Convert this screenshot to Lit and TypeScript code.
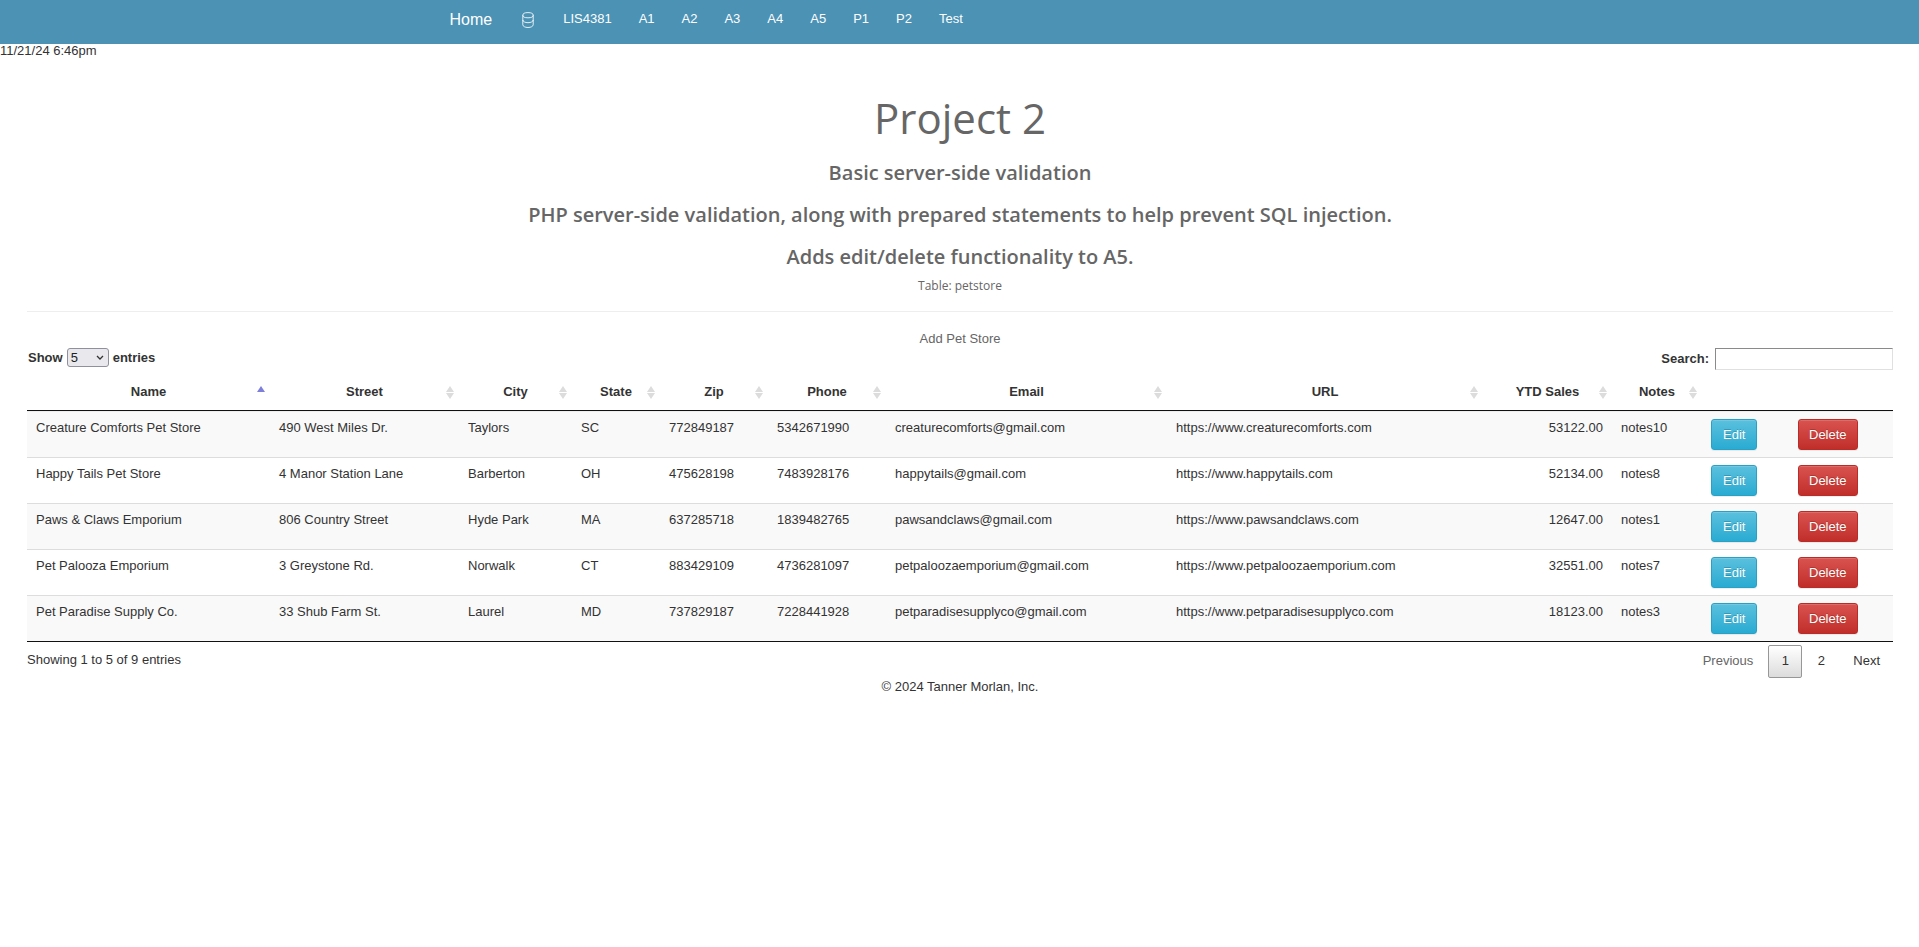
import { LitElement, html, css } from "lit";
import { customElement } from "lit/decorators.js";

interface Column {
  label: string;
  width: number;
}

interface Store {
  name: string;
  street: string;
  city: string;
  state: string;
  zip: string;
  phone: string;
  email: string;
  url: string;
  sales: string;
  notes: string;
}

const COLUMNS: Column[] = [
  { label: "Name", width: 243 },
  { label: "Street", width: 189 },
  { label: "City", width: 113 },
  { label: "State", width: 88 },
  { label: "Zip", width: 108 },
  { label: "Phone", width: 118 },
  { label: "Email", width: 281 },
  { label: "URL", width: 316 },
  { label: "YTD Sales", width: 129 },
  { label: "Notes", width: 90 },
  { label: "", width: 87 },
  { label: "", width: 104 },
];
const TOTAL = COLUMNS.reduce((sum, c) => sum + c.width, 0);

const STORES: Store[] = [
  { name: "Creature Comforts Pet Store", street: "490 West Miles Dr.", city: "Taylors", state: "SC", zip: "772849187", phone: "5342671990", email: "creaturecomforts@gmail.com", url: "https://www.creaturecomforts.com", sales: "53122.00", notes: "notes10" },
  { name: "Happy Tails Pet Store", street: "4 Manor Station Lane", city: "Barberton", state: "OH", zip: "475628198", phone: "7483928176", email: "happytails@gmail.com", url: "https://www.happytails.com", sales: "52134.00", notes: "notes8" },
  { name: "Paws & Claws Emporium", street: "806 Country Street", city: "Hyde Park", state: "MA", zip: "637285718", phone: "1839482765", email: "pawsandclaws@gmail.com", url: "https://www.pawsandclaws.com", sales: "12647.00", notes: "notes1" },
  { name: "Pet Palooza Emporium", street: "3 Greystone Rd.", city: "Norwalk", state: "CT", zip: "883429109", phone: "4736281097", email: "petpaloozaemporium@gmail.com", url: "https://www.petpaloozaemporium.com", sales: "32551.00", notes: "notes7" },
  { name: "Pet Paradise Supply Co.", street: "33 Shub Farm St.", city: "Laurel", state: "MD", zip: "737829187", phone: "7228441928", email: "petparadisesupplyco@gmail.com", url: "https://www.petparadisesupplyco.com", sales: "18123.00", notes: "notes3" },
];

const LINKS = ["LIS4381", "A1", "A2", "A3", "A4", "A5", "P1", "P2", "Test"];

@customElement("site-nav")
class SiteNav extends LitElement {
  static styles = css`
    :host {
      display: block;
      background: #4b92b5;
    }
    .bar {
      box-sizing: border-box;
      max-width: 1052px;
      min-height: 44px;
      margin: 0 auto;
      padding: 10px 16px 6px;
      display: flex;
      align-items: flex-start;
    }
    a {
      color: #fff;
      text-decoration: none;
      font-size: 13px;
      line-height: 18px;
      padding: 0 14px 0 13px;
    }
    .brand {
      font-size: 16px;
      line-height: 20px;
      padding: 0 10px 0 0;
    }
    .data {
      padding: 2px 16px 0 20px;
      line-height: 0;
    }
  `;

  render() {
    return html`
      <nav class="bar">
        <a class="brand" href="#">Home</a>
        <a class="data" href="#" aria-label="Database">
          <svg width="12" height="16" viewBox="0 0 12 16" fill="none" stroke="#fff" stroke-opacity="0.85">
            <ellipse cx="6" cy="3.2" rx="5.2" ry="2.6" />
            <path d="M.8 3.200v9.600c0 1.500 2.300 2.700 5.200 2.700s5.200-1.200 5.200-2.700V3.200M.8 8c0 1.500 2.300 2.700 5.200 2.700s5.200-1.200 5.200-2.700" />
          </svg>
        </a>
        ${LINKS.map((l) => html`<a href="#">${l}</a>`)}
      </nav>
    `;
  }
}

@customElement("store-table")
class StoreTable extends LitElement {
  static styles = css`
    :host {
      display: block;
    }
    .controls {
      display: flex;
      justify-content: space-between;
      align-items: flex-start;
      min-height: 26px;
    }
    label {
      display: flex;
      align-items: center;
      font-weight: bold;
      line-height: 18px;
    }
    .length {
      gap: 4px;
      padding-left: 1px;
    }
    select {
      box-sizing: border-box;
      width: 42px;
      height: 19px;
      margin: 0;
      padding: 0 16px 0 3px;
      border: 1px solid #8f8f9d;
      border-radius: 3px;
      appearance: none;
      background: #e9e9ed url("data:image/svg+xml,%3Csvg xmlns='http://www.w3.org/2000/svg' width='8' height='5'%3E%3Cpath d='M1 1l3 3 3-3' fill='none' stroke='%23333' stroke-width='1.300'/%3E%3C/svg%3E") no-repeat right 4px center;
      font: inherit;
      font-weight: normal;
      line-height: 17px;
      color: #222;
    }
    .search {
      gap: 6px;
    }
    input {
      box-sizing: border-box;
      width: 178px;
      height: 22px;
      margin: 0;
      padding: 0 2px;
      border: 1px solid;
      border-color: #8a8a8a #e0e0e0 #e0e0e0 #8a8a8a;
      background: #fff;
      font: inherit;
    }
    table {
      width: 100%;
      table-layout: fixed;
      border-collapse: separate;
      border-spacing: 0;
      border-bottom: 1px solid #111;
    }
    th {
      height: 18px;
      padding: 9px 16px;
      border-bottom: 1px solid #111;
      font-weight: bold;
      line-height: 18px;
      text-align: center;
      white-space: nowrap;
      background: no-repeat right 5px top 12px;
    }
    .sortable {
      background-image: url("data:image/svg+xml,%3Csvg xmlns='http://www.w3.org/2000/svg' width='8' height='13'%3E%3Cpath d='M4 0l4 6H0zM4 13l4-6H0z' fill='%23dcdcdc'/%3E%3C/svg%3E");
    }
    .sorted {
      background-image: url("data:image/svg+xml,%3Csvg xmlns='http://www.w3.org/2000/svg' width='8' height='13'%3E%3Cpath d='M4 0l4 6H0z' fill='%237e7edb'/%3E%3C/svg%3E");
    }
    td {
      padding: 7px 9px;
      border-top: 1px solid #ddd;
      line-height: 18px;
      vertical-align: top;
      white-space: nowrap;
    }
    tbody tr:first-child td {
      border-top-color: #eee;
    }
    tbody tr:nth-child(odd) {
      background: #f9f9f9;
    }
    .amount {
      text-align: right;
    }
    .btn {
      display: block;
      box-sizing: border-box;
      height: 31px;
      margin: 0;
      padding: 0 11px;
      border: 1px solid #28a1c5;
      border-radius: 3px;
      background: linear-gradient(#5bc0de, #2aabd2);
      box-shadow: inset 0 1px 0 rgba(255, 255, 255, 0.15), 0 1px 1px rgba(0, 0, 0, 0.075);
      font: inherit;
      color: #fff;
      text-shadow: 0 -1px 0 rgba(0, 0, 0, 0.2);
    }
    .danger {
      padding: 0 10px;
      border-color: #b92c28;
      background: linear-gradient(#d9534f, #c12e2a);
    }
    .foot {
      display: flex;
      justify-content: space-between;
      align-items: flex-start;
      padding-top: 3px;
    }
    .info {
      padding-top: 6px;
      line-height: 18px;
    }
    .pages {
      display: flex;
      gap: 2px;
    }
    .page {
      box-sizing: border-box;
      height: 33px;
      min-width: 34px;
      padding: 0 12px 2px;
      border: 1px solid transparent;
      border-radius: 2px;
      background: none;
      font: inherit;
      color: #333;
    }
    .page:disabled {
      color: #666;
    }
    .current {
      border-color: #979797;
      background: linear-gradient(#fff, #dcdcdc);
    }
  `;

  render() {
    return html`
      <div class="controls">
        <label class="length">
          Show
          <select>
            <option selected>5</option>
            <option>10</option>
            <option>25</option>
          </select>
          entries
        </label>
        <label class="search">Search: <input type="search" /></label>
      </div>
      <table>
        <colgroup>
          ${COLUMNS.map((c) => html`<col style="width:${(c.width / TOTAL) * 100}%" />`)}
        </colgroup>
        <thead>
          <tr>
            ${COLUMNS.map(
              (c, i) => html`<th class=${i === 0 ? "sorted" : c.label ? "sortable" : ""}>${c.label}</th>`
            )}
          </tr>
        </thead>
        <tbody>
          ${STORES.map(
            (s) => html`
              <tr>
                <td>${s.name}</td>
                <td>${s.street}</td>
                <td>${s.city}</td>
                <td>${s.state}</td>
                <td>${s.zip}</td>
                <td>${s.phone}</td>
                <td>${s.email}</td>
                <td>${s.url}</td>
                <td class="amount">${s.sales}</td>
                <td>${s.notes}</td>
                <td><button class="btn">Edit</button></td>
                <td><button class="btn danger">Delete</button></td>
              </tr>
            `
          )}
        </tbody>
      </table>
      <div class="foot">
        <div class="info">Showing 1 to 5 of 9 entries</div>
        <div class="pages">
          <button class="page" disabled>Previous</button>
          <button class="page current">1</button>
          <button class="page">2</button>
          <button class="page">Next</button>
        </div>
      </div>
    `;
  }
}

@customElement("app-root")
class AppRoot extends LitElement {
  static styles = css`
    :host {
      display: block;
      font-family: "Liberation Sans", Arial, sans-serif;
      font-size: 13px;
      line-height: 18px;
      color: #333;
    }
    .stamp {
      line-height: 14px;
    }
    main {
      padding: 0 26px 0 27px;
    }
    header {
      padding: 35px 0 16px;
      border-bottom: 1px solid #eee;
      text-align: center;
      font-family: "Trebuchet MS", "Open Sans", sans-serif;
      color: #666;
    }
    h1 {
      margin: 0 0 18px;
      font-size: 42px;
      font-weight: 400;
      line-height: 50px;
    }
    h2 {
      margin: 0 0 18px;
      font-size: 20px;
      font-weight: 600;
      line-height: 24px;
    }
    .last {
      margin-bottom: 8px;
    }
    .caption {
      font-size: 12px;
      line-height: 18px;
    }
    .add {
      display: block;
      width: max-content;
      margin: 18px auto 0;
      color: #666;
      text-decoration: none;
    }
    footer {
      text-align: center;
    }
  `;

  render() {
    return html`
      <site-nav></site-nav>
      <div class="stamp">11/21/24 6:46pm</div>
      <main>
        <header>
          <h1>Project 2</h1>
          <h2>Basic server-side validation</h2>
          <h2>PHP server-side validation, along with prepared statements to help prevent SQL injection.</h2>
          <h2 class="last">Adds edit/delete functionality to A5.</h2>
          <div class="caption">Table: petstore</div>
        </header>
        <a class="add" href="#">Add Pet Store</a>
        <store-table></store-table>
        <footer>© 2024 Tanner Morlan, Inc.</footer>
      </main>
    `;
  }
}
